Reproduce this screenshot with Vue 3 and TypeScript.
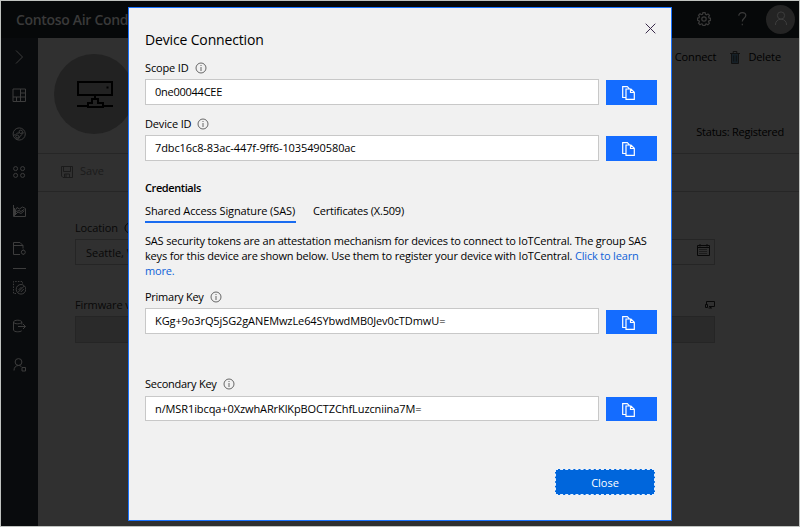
<script setup lang="ts">
interface Field {
  label: string
  value: string
  kind: string
}

const identity: Field[] = [
  { label: 'Scope ID', value: '0ne00044CEE', kind: 'scope' },
  { label: 'Device ID', value: '7dbc16c8-83ac-447f-9ff6-1035490580ac', kind: 'device' },
]
const keys: Field[] = [
  { label: 'Primary Key', value: 'KGg+9o3rQ5jSG2gANEMwzLe64SYbwdMB0Jev0cTDmwU=', kind: 'primary' },
  { label: 'Secondary Key', value: 'n/MSR1ibcqa+0XzwhARrKlKpBOCTZChfLuzcniina7M=', kind: 'secondary' },
]
</script>

<template>
  <div class="screen">
    <header class="topbar">
      <span class="brand">Contoso Air Cond</span>
      <svg class="gear" width="14" height="14" viewBox="0 0 14 14">
        <path d="M5.900.7h2.200l.4 1.700 1 .4 1.500-.9 1.500 1.500-.9 1.500.4 1 1.500.4v2.100l-1.600.4-.4 1 .9 1.400-1.500 1.600-1.500-.9-1 .4-.4 1.300H5.900l-.4-1.400-1-.4-1.500.9-1.500-1.500.9-1.500-.4-1L.5 8.200V6.100L2 5.800l.4-1-.9-1.500L3 1.800l1.500.9 1-.4z" />
        <circle cx="7" cy="7" r="2.200" />
      </svg>
      <svg class="help" width="9" height="14" viewBox="0 0 9 14">
        <path d="M.8 3.800C.8 1.800 2.300.7 4.300.7s3.500 1.100 3.500 2.900c0 2.700-3.500 2.800-3.500 6M4.300 11.800v1.500" />
      </svg>
      <span class="avatar">
        <svg width="14" height="15" viewBox="0 0 14 15">
          <circle cx="7" cy="4.500" r="3.600" />
          <path d="M1.400 14c0-3.500 2.300-5.800 5.600-5.800s5.600 2.300 5.600 5.800" />
        </svg>
      </span>
    </header>

    <div class="body">
      <nav class="rail">
        <svg viewBox="0 0 14 14"><path d="M4 .5 10.500 7 4 13.500" /></svg>
        <svg viewBox="0 0 14 14"><path d="M1 1h12.500v12.500H1zM1 9h7.500M8.500 1v12.500M4.500 9v4.500M8.500 5h5M8.500 9h5" /></svg>
        <svg viewBox="0 0 14 14"><circle cx="7.200" cy="7" r="6.100" /><circle cx="8.800" cy="4.800" r="1.700" /><circle cx="5.200" cy="9.500" r="1.500" /><path d="M2 8c2.500.5 2-2.500 5-2M4 12c2.500.5 3-.5 3.500-2s2.500-1.500 4-4.500" /></svg>
        <svg viewBox="0 0 14 14"><circle cx="3.600" cy="3.600" r="2" /><circle cx="10.600" cy="3.600" r="2" /><circle cx="3.600" cy="10.400" r="2" /><circle cx="10.600" cy="10.400" r="2" /></svg>
        <svg viewBox="0 0 14 14"><path d="M1.500 1v11.500h12V4.500L10.500 3 7.500 5 5 3.500 3.500 6v5M4 10l2-2 3 1.500 3-2.500M4 7.500l3-1 2 1 3-2 1 1M2.500 4v8" /></svg>
        <svg viewBox="0 0 14 14"><path d="M8 12.500H1.500V.5h6.500l3 3v3M2 3.500h9" /><circle cx="11.300" cy="10.200" r="2" /><path d="M11.300 7.500v.8M11.300 12.100v.8" /></svg>
        <i class="rule"></i>
        <svg viewBox="0 0 14 14"><path stroke-dasharray="1.500 1.200" d="M4 12.500H1.500V.5h9v2" /><circle cx="9" cy="8.300" r="4.800" /><path d="M5.800 11.500l6.500-6.500M6.500 9l3-3M8.800 11l3-3" /></svg>
        <svg viewBox="0 0 14 14"><path d="M1.500 3v8c0 1 2 1.800 4.200 1.800 1.700 0 3.200-.4 4-1M1.500 3c0-1 2-1.800 4.200-1.800S9.800 2 9.800 3v2.500M1.500 3c0 1 2 1.800 4.200 1.800S9.800 4 9.800 3M6 7.500h7.500M11 5l2.500 2.500L11 10" /></svg>
        <svg viewBox="0 0 14 14"><circle cx="6.500" cy="4" r="3.400" /><path d="M2 12.500c0-3 1.700-5 4.500-5 1.300 0 2.500.5 3 1.400M10 9.500h3.500V13H10z" /></svg>
      </nav>

      <main class="content">
        <section class="hero">
          <span class="disc">
            <svg width="36" height="29" viewBox="0 0 36 29">
              <path d="M1 1h34v13H1zM18 14v5M15 18h6v4h5v4H11v-4h4zM0 25h11M26 25h10" />
              <path class="dot" d="M29.500 5.500h2v2h-2z" />
            </svg>
          </span>
          <div class="side">
            <div class="actions">
              <span class="t-connect">Connect</span>
              <svg width="10" height="13" viewBox="0 0 10 13">
                <path class="bin" d="M1.500 2.500h7v10h-7z" />
                <path d="M0 2.500h10M3.200 2.500v-2h3.600v2M1.500 2.500v10h7v-10M3.700 4.500v6M6.300 4.500v6" />
              </svg>
              <span class="t-delete">Delete</span>
            </div>
            <span class="status">Status: Registered</span>
          </div>
        </section>
        <section class="toolbar">
          <svg width="12" height="12" viewBox="0 0 12 12"><path d="M.5.5h11v11H2L.5 10zM2.500.5v5h7v-5M3.500 11.500V8h5v3.500M5 8.500v3" /></svg>
          <span>Save</span>
        </section>
        <section class="form">
          <div class="row-label">
            <span>Location</span>
            <svg class="info" viewBox="0 0 12 12"><circle cx="6" cy="6" r="5" /><path d="M6 5v4M6 3v1" /></svg>
          </div>
          <div class="dim-input">
            <span>Seattle, W</span>
            <svg class="calendar" width="13" height="12" viewBox="0 0 13 12"><path d="M.5 1.500h12v10H.5zM.5 3.500h12M3 0v2.500M10 0v2.500" /><path stroke-dasharray="1 1" d="M2.500 5.500h8M2.500 7.500h8M2.500 9.500h8" /></svg>
          </div>
          <div class="row-label second">
            <span>Firmware v</span>
            <svg class="screens" width="10" height="8" viewBox="0 0 10 8"><path d="M1.500 3V.5h8v5H4M.5 3.500h2v3h-2zM3.500 7h3.500M5.500 5.500V7" /></svg>
          </div>
          <div class="dim-input disabled"></div>
        </section>
      </main>
    </div>

    <div class="modal" role="dialog">
      <button class="dismiss" aria-label="Close dialog">
        <svg width="11" height="11" viewBox="0 0 11 11"><path d="M.7.7l9.600 9.600M10.300.7.7 10.300" /></svg>
      </button>
      <h1>Device Connection</h1>
      <div v-for="f in identity" :key="f.kind" class="field" :class="f.kind">
        <div class="label">
          <span>{{ f.label }}</span>
          <svg class="info" viewBox="0 0 12 12"><circle cx="6" cy="6" r="5" /><path d="M6 5v4M6 3v1" /></svg>
        </div>
        <div class="line">
          <div class="input"><span>{{ f.value }}</span></div>
          <button class="copy">
            <svg width="13" height="14" viewBox="0 0 13 14"><path d="M3.500 11.500H.7V.7h4.600l2 2M4 3h5l3.300 3.300v7H4zM8.500 3v3.500h3.600" /></svg>
          </button>
        </div>
      </div>
      <h2>Credentials</h2>
      <div class="tabs">
        <span class="tab active">Shared Access Signature (SAS)</span>
        <span class="tab certs">Certificates (X.509)</span>
      </div>
      <p class="desc">
        <span>SAS security tokens are an attestation mechanism for devices to connect to IoTCentral. The group SAS</span><br />
        <span>keys for this device are shown below. Use them to register your device with IoTCentral. <a>Click to learn</a></span><br />
        <a>more.</a>
      </p>
      <div v-for="f in keys" :key="f.kind" class="field" :class="f.kind">
        <div class="label">
          <span>{{ f.label }}</span>
          <svg class="info" viewBox="0 0 12 12"><circle cx="6" cy="6" r="5" /><path d="M6 5v4M6 3v1" /></svg>
        </div>
        <div class="line">
          <div class="input"><span>{{ f.value }}</span></div>
          <button class="copy">
            <svg width="13" height="14" viewBox="0 0 13 14"><path d="M3.500 11.500H.7V.7h4.600l2 2M4 3h5l3.300 3.300v7H4zM8.500 3v3.500h3.600" /></svg>
          </button>
        </div>
      </div>
      <button class="close">Close</button>
    </div>
  </div>
</template>

<style>
body { margin: 0; overflow: hidden; }
</style>

<style scoped>
* { box-sizing: border-box; }
.screen {
  position: relative;
  width: 800px;
  height: 527px;
  border: 1px solid #c0c3c0;
  background: #303030;
  display: flex;
  flex-direction: column;
  font-family: "Open Sans", "Noto Sans", sans-serif;
  font-size: 11px;
  color: #000;
  white-space: nowrap;
}
svg { fill: none; stroke: currentColor; stroke-width: 1; flex: none; display: block; }
button { font: inherit; border: 0; padding: 0; margin: 0; }

.topbar { height: 37px; flex: none; background: #060809; display: flex; align-items: center; padding: 0 4px 0 15px; color: #3a3a3a; }
.brand { font-size: 14px; font-weight: 600; letter-spacing: -0.32px; margin-right: auto; }
.gear { margin: -2px 27px 0 0; stroke-width: 1.200; }
.help { margin: -2px 19px 0 0; stroke-width: 1.200; }
.avatar { width: 29px; height: 29px; border-radius: 50%; background: #242424; color: #3d3d3d; display: flex; align-items: center; justify-content: center; }
.avatar svg { margin-top: -2px; }

.body { flex: 1; display: flex; min-height: 0; }
.rail { width: 37px; background: #090b0d; color: #3d3d3d; display: flex; flex-direction: column; align-items: center; padding: 12px 1px 0 0; gap: 24.400px; }
.rail svg { width: 14px; height: 14px; }
.rule { width: 13px; height: 1px; background: #3d3d3d; margin: -12.500px 0 -12.500px; flex: none; }

.content { flex: 1; display: flex; flex-direction: column; }
.hero { height: 116px; flex: none; border-bottom: 1px solid #262626; display: flex; justify-content: space-between; padding: 16px 15px 0 16px; }
.disc { width: 80px; height: 80px; border-radius: 50%; background: #222; display: flex; align-items: center; justify-content: center; }
.disc svg { stroke-width: 2; margin: 2px 0 0 2px; }
.dot { fill: #000; stroke: none; }
.side { display: flex; flex-direction: column; align-items: flex-end; }
.actions { display: flex; align-items: center; height: 13px; margin: -4px 3px 0 0; }
.t-connect, .t-delete { letter-spacing: -0.1px; }
.actions svg { margin: 1px 8px 0 14px; color: #111; }
.bin { fill: #162027; stroke: none; }
.status { margin-top: 61px; line-height: 15px; letter-spacing: -0.25px; }
.toolbar { height: 38px; flex: none; border-bottom: 1px solid #262626; padding: 0 0 2px 23px; display: flex; align-items: center; gap: 7px; color: #1b1b1b; }
.toolbar span { margin-top: -2px; }
.form { padding: 28px 84px 0 37px; display: flex; flex-direction: column; color: #080808; }
.row-label { height: 15px; display: flex; align-items: center; gap: 6px; margin-bottom: 4px; letter-spacing: -0.12px; }
.row-label.second { margin-top: 32px; justify-content: space-between; }
.dim-input { height: 26px; border: 1px solid #252525; display: flex; align-items: center; justify-content: space-between; padding: 0 4px 0 10px; }
.calendar { margin-top: -4px; }
.dim-input.disabled { height: 27px; background: #2a2a2a; }
.info { width: 12px; height: 12px; }

.modal {
  position: absolute;
  left: 127px;
  top: 6px;
  width: 544px;
  height: 514px;
  background: #f1f1f1;
  border: 1px solid #1a73ff;
  padding: 0 13px 0 16px;
  display: flex;
  flex-direction: column;
}
.dismiss { align-self: flex-end; background: none; color: #3a2a4a; margin: 15px 2px 0 0; height: 11px; }
h1 { margin: -4px 0 0; font-size: 14px; line-height: 20px; font-weight: 400; letter-spacing: -0.15px; }
.field { display: flex; flex-direction: column; letter-spacing: -0.1px; }
.label { height: 15px; display: flex; align-items: center; gap: 6px; letter-spacing: -0.15px; }
.label .info { color: #444; stroke-width: 0.800; }
.line { display: flex; align-items: flex-end; gap: 7px; margin-top: 4px; }
.input { width: 454px; height: 26px; background: #fff; border: 1px solid #c8c8c8; padding: 0 0 1px 9px; display: flex; align-items: center; }
.copy { width: 51px; height: 25px; background: #146cff; color: #fff; display: flex; align-items: center; padding-left: 16px; }
.copy svg { stroke-width: 1.200; margin-top: 1px; }
.scope { margin-top: 10px; }
.scope .input { letter-spacing: -0.25px; }
.device { margin-top: 11px; }
h2 { margin: 19px 0 0; font-size: 11px; line-height: 15px; font-weight: 600; letter-spacing: -0.42px; }
.tabs { display: flex; gap: 17px; margin-top: 8px; }
.tab { line-height: 16px; height: 20px; letter-spacing: -0.12px; }
.certs { letter-spacing: -0.2px; }
.tab.active { width: 151px; border-bottom: 2px solid #1a6cf0; }
.desc { margin: 10px 0 0; line-height: 15px; letter-spacing: -0.183px; }
.desc a { color: #0f62d8; }
.primary { margin-top: 11px; }
.primary .label, .secondary .label { letter-spacing: -0.26px; }
.primary .copy, .secondary .copy { height: 24px; }
.secondary { margin-top: 42px; }
.secondary .line { margin-top: 5px; }
.secondary .input { height: 25px; }
.close { align-self: flex-end; width: 100px; height: 26px; margin: 48px 3px 0 0; background: #0066dc; color: #fff; border: 1px dashed #e4f0ff; }
</style>
